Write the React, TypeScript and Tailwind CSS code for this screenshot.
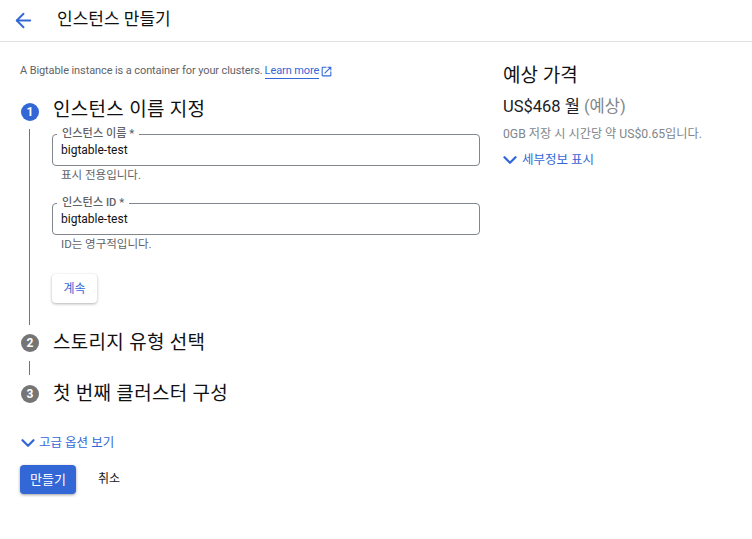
import { ArrowLeft, ChevronDown } from "lucide-react";

const font = "font-['Roboto','Noto_Sans_CJK_KR',sans-serif]";

function StepTitle({
  n,
  title,
  active,
  badgeClass = "",
}: {
  n: number;
  title: string;
  active?: boolean;
  badgeClass?: string;
}) {
  return (
    <div className="flex h-[26px] items-center">
      <div className="ml-[21px] flex w-[32px] shrink-0">
        <div
          className={`flex h-[18px] w-[18px] shrink-0 items-center justify-center rounded-full text-[12px] font-bold text-white ${badgeClass} ${
            active ? "bg-[#3367d6]" : "bg-[#757575]"
          }`}
        >
          {n}
        </div>
      </div>
      <div className="text-[19px] leading-[26px] tracking-[0.3px] text-[#111]">{title}</div>
    </div>
  );
}

function Field({ label, value, hint }: { label: string; value: string; hint: string }) {
  return (
    <div>
      <fieldset className="h-[37px] rounded-[4px] border border-[#80868b] pl-[4px] pr-2">
        <legend className="px-[5px] text-[11.2px] leading-[10px] font-medium text-[#5f6368]">{label}</legend>
        <div className="mt-[2px] pl-[4px] text-[12px] leading-[18px] text-[#111]">{value}</div>
      </fieldset>
      <div className="mt-[1px] pl-[9px] text-[11.5px] leading-[16px] text-[#5f6368]">{hint}</div>
    </div>
  );
}

export default function App() {
  return (
    <div className={`min-h-[539px] w-[752px] bg-white ${font}`}>
      <header className="flex h-[42px] items-center border-b border-[#e0e0e0] pl-[12px]">
        <ArrowLeft size={23} strokeWidth={2} className="text-[#3367d6]" />
        <h1 className="ml-[22px] -translate-y-px text-[17px] font-normal text-[#111]">인스턴스 만들기</h1>
      </header>

      <div className="flex">
        <main className="w-[503px] shrink-0">
          <p className="mt-[21px] ml-[20px] flex items-center text-[11px] leading-[16px] tracking-[-0.1px] text-[#5f6368]">
            A Bigtable instance is a container for your clusters.
            <span className="ml-[2px] border-b border-[#3367d6] leading-[14px] text-[#3367d6]">Learn more</span>
            <svg viewBox="0 0 24 24" width="13" height="13" fill="#3367d6" className="ml-[1px]">
              <path d="M19 19H5V5h7V3H5a2 2 0 00-2 2v14a2 2 0 002 2h14c1.1 0 2-.9 2-2v-7h-2v7zM14 3v2h3.59l-9.83 9.83 1.41 1.41L19 6.41V10h2V3h-7z" />
            </svg>
          </p>

          <div className="mt-[18px]">
            <StepTitle n={1} title="인스턴스 이름 지정" active badgeClass="mt-[3px]" />
          </div>
          <div className="mt-[6px] ml-[29px] border-l border-[#757575] pr-[23px] pb-[22px] pl-[22px]">
            <div className="flex flex-col gap-[15px]">
              <Field label="인스턴스 이름 *" value="bigtable-test" hint="표시 전용입니다." />
              <Field label="인스턴스 ID *" value="bigtable-test" hint="ID는 영구적입니다." />
            </div>
            <button className="mt-[22px] flex h-[29px] w-[45px] items-center justify-center rounded-[4px] bg-white text-[12px] text-[#3367d6] shadow-[0_1px_3px_rgba(60,64,67,0.4)]">
              계속
            </button>
          </div>

          <div className="mt-[5px]">
            <StepTitle n={2} title="스토리지 유형 선택" />
          </div>
          <div className="mt-[5px] ml-[29px] h-[14px] border-l border-[#757575]" />
          <div className="mt-[6px]">
            <StepTitle n={3} title="첫 번째 클러스터 구성" />
          </div>

          <div className="mt-[28px] ml-[20px] flex h-[16px] items-center text-[12.5px] leading-[16px] text-[#3367d6]">
            <ChevronDown size={22} strokeWidth={2.5} className="-my-[3px] -ml-[3px] shrink-0" />
            고급 옵션 보기
          </div>

          <div className="mt-[14px] ml-[20px] flex items-center">
            <button className="flex h-[29px] w-[56px] items-center justify-center rounded-[4px] bg-[#3367d6] text-[13px] text-white shadow-[0_1px_3px_rgba(60,64,67,0.5)]">
              만들기
            </button>
            <button className="ml-[22px] -translate-y-px text-[12px] text-[#202124]">취소</button>
          </div>
        </main>

        <aside className="pt-[21px]">
          <h2 className="text-[19px] leading-[26px] font-normal text-[#111]">예상 가격</h2>
          <div className="mt-[6px] text-[16.5px] leading-[24px] text-[#202124]">
            US$468 월 <span className="text-[#80868b]">(예상)</span>
          </div>
          <div className="mt-[7px] text-[12.2px] leading-[16px] text-[#80868b]">0GB 저장 시 시간당 약 US$0.65입니다.</div>
          <div className="mt-[10px] flex h-[16px] items-center text-[12.5px] leading-[16px] text-[#3367d6]">
            <ChevronDown size={22} strokeWidth={2.5} className="-my-[3px] mr-[1px] -ml-[4px] shrink-0" />
            세부정보 표시
          </div>
        </aside>
      </div>
    </div>
  );
}
